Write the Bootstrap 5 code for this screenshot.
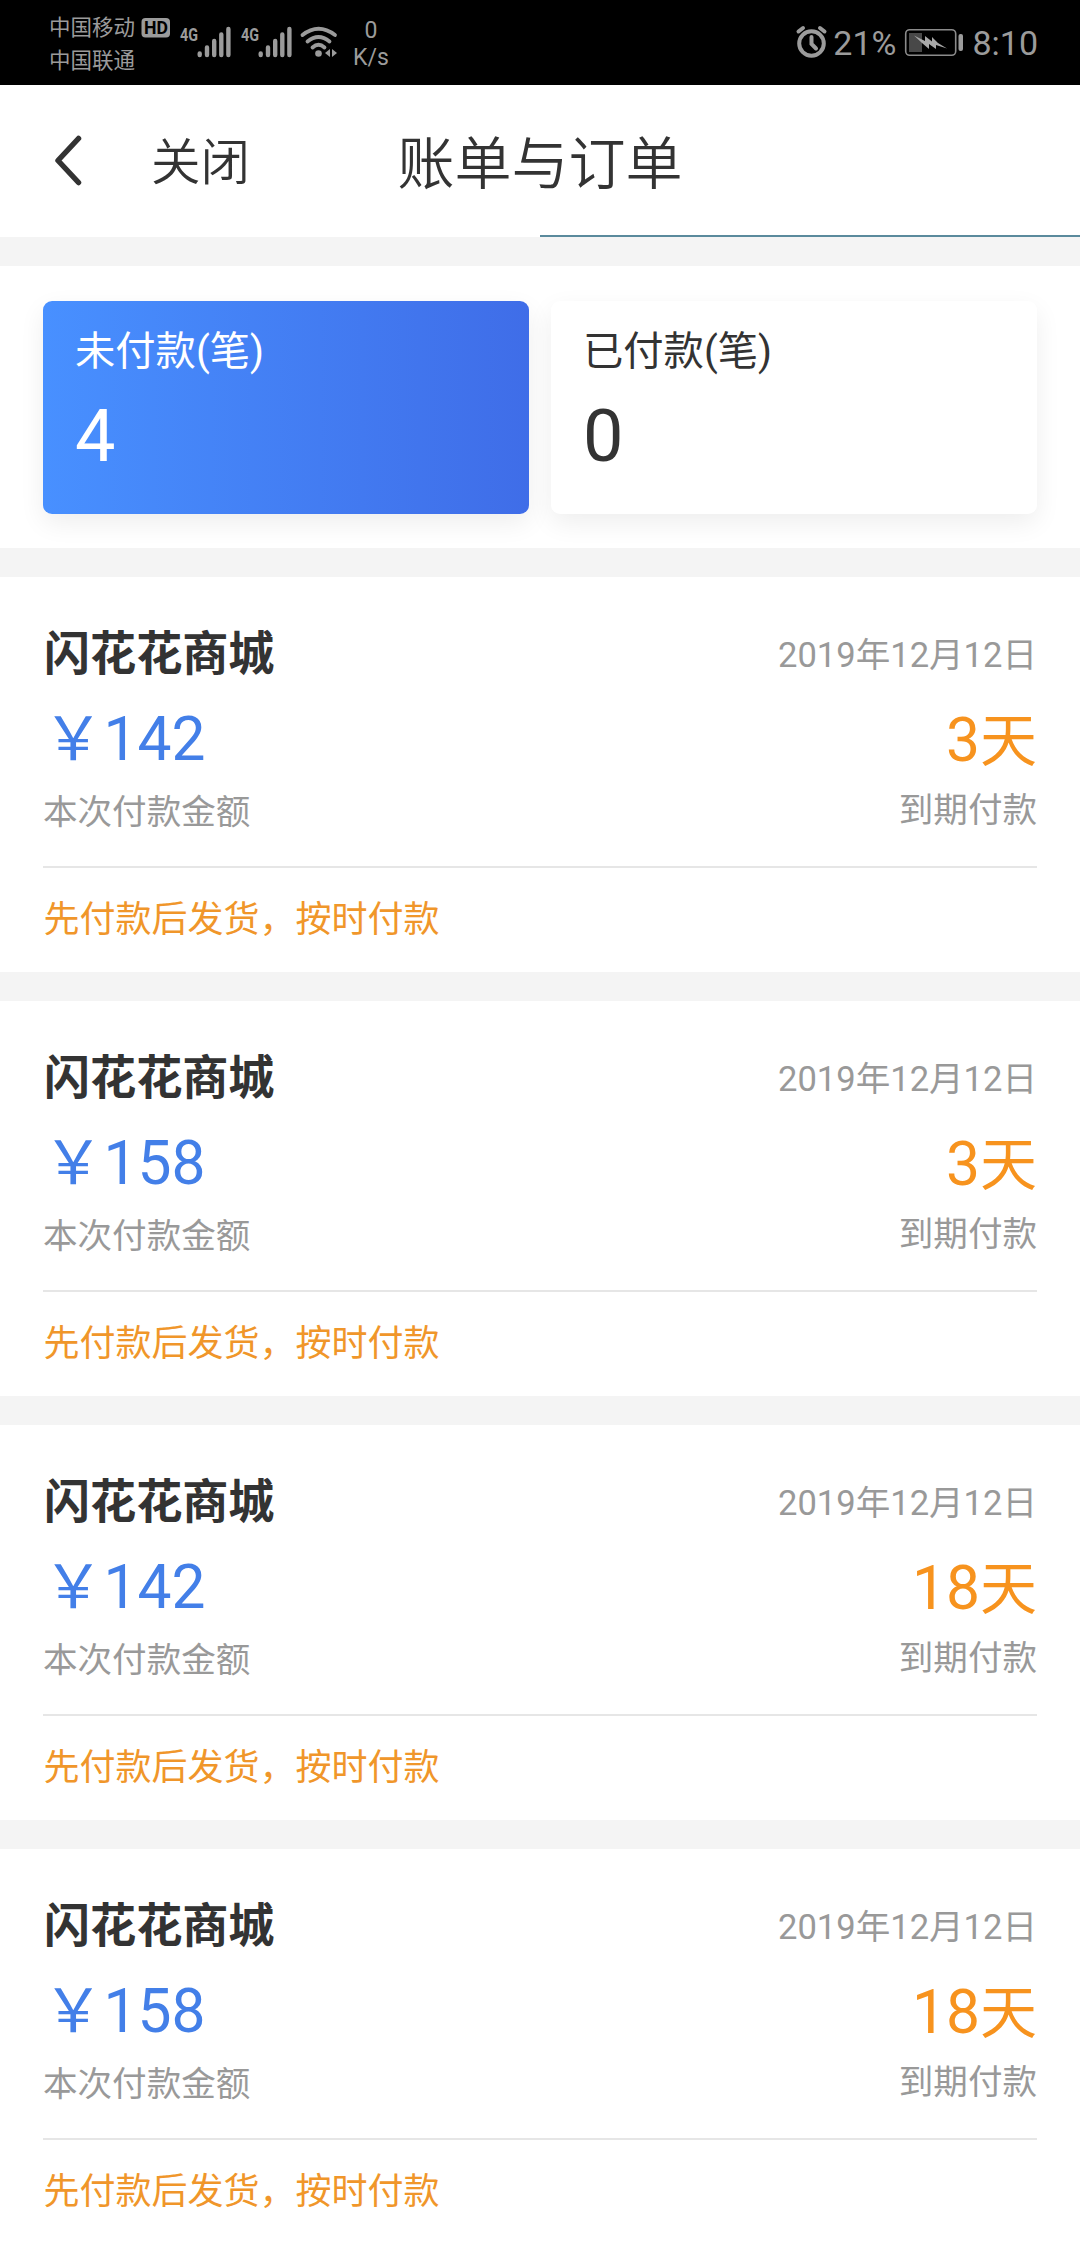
<!DOCTYPE html>
<html lang="zh-CN">
<head>
<meta charset="utf-8">
<meta name="viewport" content="width=device-width, initial-scale=1">
<title>账单与订单</title>
<link href="https://cdn.jsdelivr.net/npm/bootstrap@5.3.0/dist/css/bootstrap.min.css" rel="stylesheet">
<style>
  body { font-family: Roboto, "Noto Sans CJK SC", sans-serif; color: #333; background: #f4f4f4; overflow: hidden; line-height: 1; }
  .status-bar { height: 85px; color: #9b9b9b; padding: 0 42px 0 49px; }
  .carriers { font-size: 21.5px; line-height: 33px; padding-top: 11px; width: 90px; }
  .net-rate { font-size: 23px; line-height: 27px; width: 40px; padding-top: 17px; margin-left: 12px; }
  .clock-text { font-size: 34px; line-height: 86px; }
  .title-bar { height: 152px; background: #fff; padding-left: 53px; }
  .close-link { font-size: 49.5px; color: #333; margin-left: 68px; padding-top: 6px; font-weight: 350; }
  .page-title { font-size: 57px; font-weight: 350; padding-top: 8px; }
  .tab-line { height: 2px; width: 540px; background: #5a8a9c; }
  .panel { background: #fff; padding: 35px 43px 34px; margin-top: 29px; height: 282px; }
  .summary { gap: 22px; }
  .sum-card { height: 213px; border: 0; border-radius: 9px; padding: 31px 32px; box-shadow: 0 9px 26px rgba(0,0,0,.07); color: #333; }
  .sum-card.on { background: linear-gradient(90deg, #4890ff, #3f6de8); color: #fff; }
  .sum-label { font-size: 40.3px; line-height: 40px; }
  .sum-num { font-size: 72px; line-height: 72px; margin-top: 29px; }
  .bill { background: #fff; height: 395.2px; margin-top: 28.8px; padding: 0 43px; }
  .shop { font-size: 46.1px; font-weight: 700; line-height: 60px; padding-top: 47px; padding-left: 1px; }
  .bill-date { font-size: 34.56px; line-height: 60px; padding-top: 48px; color: #999; }
  .price, .days { font-size: 60.5px; line-height: 64px; height: 64px; }
  .price { color: #437fe8; margin-top: 24px; }
  .days { color: #f7931e; margin-top: 24px; }
  .day-unit { font-size: 57px; line-height: 1; }
  .hint { font-size: 34.56px; line-height: 40px; color: #999; margin-top: 20px; }
  .text-end .hint { margin-top: 17px; }
  .rule { height: 2px; background: #e6e6e6; }
  .bill-top { height: 289px; }
  .note { font-size: 36px; line-height: 36px; color: #f0962a; margin-top: 34px; padding-left: .5px; }
</style>
</head>
<body>
<header class="status-bar bg-black d-flex justify-content-between">
  <div class="d-flex">
    <div class="carriers text-nowrap"><div>中国移动</div><div>中国联通</div></div>
    <svg width="200" height="85" viewBox="139 0 200 85" fill="#9b9b9b" font-family="Roboto, sans-serif">
      <rect x="141.500" y="18" width="28.500" height="19.500" rx="4"/>
      <text x="144" y="34" font-size="18" font-weight="700" fill="#000" textLength="24" lengthAdjust="spacingAndGlyphs">HD</text>
      <g id="signal">
        <text x="180" y="40.500" font-size="19" font-weight="700" textLength="18" lengthAdjust="spacingAndGlyphs">4G</text>
        <path d="M199.700 53.500v1.500M207 47.500V55M214.200 41V55M221.300 34.500V55M228.400 29V55" stroke="#9b9b9b" stroke-width="4.400" stroke-linecap="round"/>
      </g>
      <use href="#signal" x="61"/>
      <g fill="none" stroke="#9b9b9b" stroke-width="3.800" stroke-linecap="round">
        <path d="M302.500 35Q318.500 22.500 335 35"/><path d="M307.500 41.500Q318.500 32.500 329.500 41.500"/><path d="M312.500 47.500Q318.500 42 324.500 47.500"/>
      </g>
      <circle cx="318.500" cy="53.500" r="3.300"/>
      <path d="M325 53l5-4v8z M332 49v8l5-4z"/>
    </svg>
    <div class="net-rate text-center"><div>0</div><div>K/s</div></div>
  </div>
  <div class="d-flex">
    <svg width="38" height="85" viewBox="795.500 0 38 85" fill="none" stroke="#9b9b9b" stroke-width="4" stroke-linecap="round">
      <circle cx="812" cy="43.500" r="12.300"/><path d="M812 37v7l4.500 4.500M799 31.500l4.500-3.500M820.500 28l4.500 3.500"/>
    </svg>
    <div class="clock-text">21%</div>
    <svg width="68" height="85" viewBox="896 0 68 85">
      <rect x="905.700" y="29.700" width="50" height="25.600" rx="4" fill="none" stroke="#8b8b8b" stroke-width="1.600"/>
      <rect x="909" y="33" width="13" height="19" fill="#484848"/>
      <path d="M914 35.500L925 41V36L932 41.500V37L938 43L947 48.500L936 45V49L929 44V49L922 43Z" fill="#a8a8a8"/>
      <rect x="958.500" y="34" width="4.500" height="17" rx="2" fill="#9b9b9b"/>
    </svg>
    <div class="clock-text ms-2">8:10</div>
  </div>
</header>

<nav class="title-bar position-relative d-flex align-items-center">
  <svg width="30" height="52" viewBox="0 0 30 52" fill="none" stroke="#333" stroke-width="5.500" stroke-linecap="round" stroke-linejoin="round"><path d="M25.500 3.500L5 25.500l20.500 22"/></svg>
  <a class="close-link text-decoration-none" href="#">关闭</a>
  <h1 class="page-title m-0 position-absolute start-50 translate-middle-x text-nowrap">账单与订单</h1>
  <div class="tab-line position-absolute bottom-0 end-0"></div>
</nav>

<section class="panel">
  <div class="summary d-flex">
    <div class="sum-card on card flex-fill"><div class="sum-label">未付款(笔)</div><div class="sum-num">4</div></div>
    <div class="sum-card card flex-fill"><div class="sum-label">已付款(笔)</div><div class="sum-num">0</div></div>
  </div>
</section>

<main id="bills"></main>

<template id="bill-tpl">
  <article class="bill">
    <div class="bill-top d-flex justify-content-between">
      <div><div class="shop">闪花花商城</div><div class="price"></div><div class="hint">本次付款金额</div></div>
      <div class="text-end"><div class="bill-date">2019年12月12日</div><div class="days"><span class="day-count"></span><span class="day-unit">天</span></div><div class="hint">到期付款</div></div>
    </div>
    <div class="rule"></div>
    <div class="note">先付款后发货，按时付款</div>
  </article>
</template>

<script src="https://cdn.jsdelivr.net/npm/bootstrap@5.3.0/dist/js/bootstrap.bundle.min.js"></script>
<script>
  const tpl = document.getElementById('bill-tpl');
  [[142, 3], [158, 3], [142, 18], [158, 18]].forEach(([amount, days]) => {
    const node = tpl.content.cloneNode(true);
    node.querySelector('.price').textContent = '￥' + amount;
    node.querySelector('.day-count').textContent = days;
    document.getElementById('bills').append(node);
  });
</script>
</body>
</html>
